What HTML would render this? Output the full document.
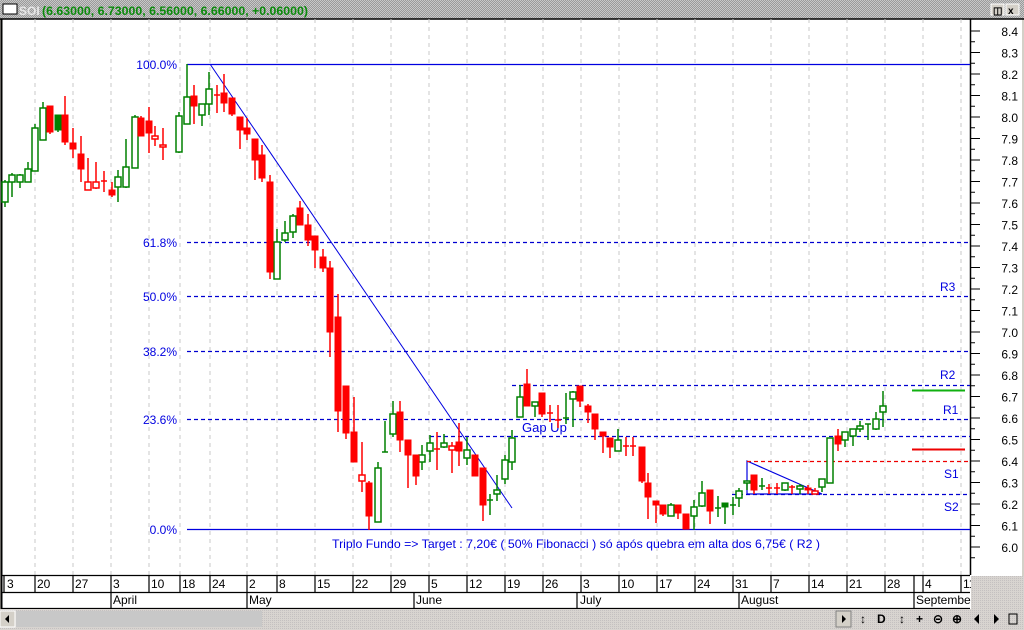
<!DOCTYPE html>
<html><head><meta charset="utf-8"><style>
html,body{margin:0;padding:0;width:1024px;height:630px;overflow:hidden;background:#d4d0c8;font-family:"Liberation Sans",sans-serif}
svg{position:absolute;left:0;top:0}
.G path,.GF path{stroke:#008000;stroke-width:1.5;fill:none}
.G rect{fill:#fff;stroke:#008000;stroke-width:1.5}
.GF rect{fill:#008000;stroke:#008000;stroke-width:1}
.R path,.RO path{stroke:#f00;stroke-width:1.5;fill:none}
.R rect{fill:#f00;stroke:#f00;stroke-width:1}
.RO rect{fill:#fff;stroke:#f00;stroke-width:1.5}
text{font-family:"Liberation Sans",sans-serif}
</style></head><body>
<svg width="1024" height="630" viewBox="0 0 1024 630">
<defs>
<pattern id="dith" width="2" height="2" patternUnits="userSpaceOnUse"><rect width="2" height="2" fill="#9a9a9a"/><rect width="1" height="1" fill="#c8c8c8"/><rect x="1" y="1" width="1" height="1" fill="#c8c8c8"/></pattern>
<pattern id="dith2" width="2" height="2" patternUnits="userSpaceOnUse"><rect width="2" height="2" fill="#d8d4d0"/><rect width="1" height="1" fill="#c4c0c0"/></pattern>
</defs>
<rect x="0" y="0" width="1024" height="19" fill="url(#dith)"/>
<rect x="3" y="4" width="14" height="10" fill="#fff" stroke="#000"/>
<text x="19" y="15" font-size="12" font-weight="bold" fill="#e8e8e8">SOI</text>
<text x="42" y="15" font-size="12" font-weight="bold" fill="#0a8a0a" textLength="266" lengthAdjust="spacingAndGlyphs">(6.63000, 6.73000, 6.56000, 6.66000, +0.06000)</text>
<rect x="991" y="4" width="13" height="11" fill="#d4d0c8" stroke="#fff"/><text x="993" y="14" font-size="10" font-weight="bold">&#9707;</text>
<rect x="1006" y="4" width="13" height="11" fill="#d4d0c8" stroke="#fff"/><text x="1008" y="14" font-size="10" font-weight="bold">x</text>
<rect x="2" y="19" width="1020" height="590" fill="#fff"/>
<line x1="0" y1="19" x2="1024" y2="19" stroke="#000" stroke-width="1.5"/>
<line x1="1.5" y1="19" x2="1.5" y2="609" stroke="#000" stroke-width="2"/>
<g stroke="#c8c8c8" stroke-width="1" stroke-dasharray="4,4">
<path d="M35 19V575M73 19V575M111 19V575M149 19V575M180 19V575M210 19V575M247 19V575M277 19V575M315 19V575M353 19V575M391 19V575M429 19V575M467 19V575M505 19V575M543 19V575M581 19V575M619 19V575M657 19V575M695 19V575M733 19V575M771 19V575M809 19V575M847 19V575M885 19V575M923 19V575M961 19V575"/>
</g>
<line x1="970.5" y1="19" x2="970.5" y2="575" stroke="#000" stroke-width="1.5"/>
<g stroke="#000" stroke-width="1">
<path d="M970 31h10M970 52.5h10M970 74h10M970 95.5h10M970 117h10M970 138.5h10M970 160h10M970 181.5h10M970 203h10M970 224.5h10M970 246h10M970 267.5h10M970 289h10M970 310.5h10M970 332h10M970 353.5h10M970 375h10M970 396.5h10M970 418h10M970 439.5h10M970 461h10M970 482.5h10M970 504h10M970 525.5h10M970 547h10"/>
<path d="M970 41.75h5M970 63.25h5M970 84.75h5M970 106.25h5M970 127.75h5M970 149.25h5M970 170.75h5M970 192.25h5M970 213.75h5M970 235.25h5M970 256.75h5M970 278.25h5M970 299.75h5M970 321.25h5M970 342.75h5M970 364.25h5M970 385.75h5M970 407.25h5M970 428.75h5M970 450.25h5M970 471.75h5M970 493.25h5M970 514.75h5M970 536.25h5M970 557.75h5"/>
</g>
<g font-size="12" fill="#000" text-anchor="end">
<text x="1018" y="36">8.4</text><text x="1018" y="57.5">8.3</text><text x="1018" y="79">8.2</text><text x="1018" y="100.5">8.1</text><text x="1018" y="122">8.0</text><text x="1018" y="143.5">7.9</text><text x="1018" y="165">7.8</text><text x="1018" y="186.5">7.7</text><text x="1018" y="208">7.6</text><text x="1018" y="229.5">7.5</text><text x="1018" y="251">7.4</text><text x="1018" y="272.5">7.3</text><text x="1018" y="294">7.2</text><text x="1018" y="315.5">7.1</text><text x="1018" y="337">7.0</text><text x="1018" y="358.5">6.9</text><text x="1018" y="380">6.8</text><text x="1018" y="401.5">6.7</text><text x="1018" y="423">6.6</text><text x="1018" y="444.5">6.5</text><text x="1018" y="466">6.4</text><text x="1018" y="487.5">6.3</text><text x="1018" y="509">6.2</text><text x="1018" y="530.5">6.1</text><text x="1018" y="552">6.0</text>
</g>
<g stroke="#0000e0" stroke-width="1.2">
<path d="M187 64.5H970M187 529.5H970"/>
<path d="M210 64L512 508" stroke-width="1"/>
<path d="M747 461V494H822ZM747 461L822 494" fill="none"/>
</g>
<g stroke="#0000d0" stroke-width="1.2" stroke-dasharray="4,3" fill="none">
<path d="M187 242.5H970M187 296.5H970M187 351.5H970M187 419.5H970M512 385.5H970M430 436.5H970M732 494.5H970"/>
</g>
<path d="M747 461.5H970" stroke="#e00" stroke-width="1.2" stroke-dasharray="4,3"/>
<path d="M912 390.5H965" stroke="#10b010" stroke-width="2"/>
<path d="M912 449.5H965" stroke="#e00" stroke-width="2"/>
<g font-size="12" fill="#0000e0">
<g text-anchor="end"><text x="177" y="69">100.0%</text><text x="177" y="247">61.8%</text><text x="177" y="301">50.0%</text><text x="177" y="356">38.2%</text><text x="177" y="424">23.6%</text><text x="177" y="534">0.0%</text></g>
<text x="940" y="291">R3</text><text x="940" y="379">R2</text><text x="943" y="414">R1</text><text x="944" y="478">S1</text><text x="944" y="511">S2</text>
<text x="522" y="432" font-size="13">Gap Up</text>
<text x="332" y="548" textLength="488" lengthAdjust="spacingAndGlyphs">Triplo Fundo =&gt; Target : 7,20€ ( 50% Fibonacci ) só após quebra em alta dos 6,75€ ( R2 )</text>
</g>
<g class="G">
<path d="M5 180V207"/><rect x="2" y="182" width="6" height="20"/>
<path d="M12 173V197"/><rect x="9" y="175" width="6" height="7"/>
<path d="M20 174V188"/><rect x="17" y="175" width="6" height="7"/>
<path d="M28 162V182"/><rect x="25" y="169" width="6" height="13"/>
<path d="M35 124V171"/><rect x="32" y="128" width="6" height="43"/>
<path d="M43 102V140"/><rect x="40" y="108" width="6" height="32"/>
<path d="M118 170V202"/><rect x="115" y="177" width="6" height="10"/>
<path d="M126 139V188"/><rect x="123" y="167" width="6" height="20"/>
<path d="M135 115V168"/><rect x="132" y="117" width="6" height="51"/>
<path d="M179 112V153"/><rect x="176" y="116" width="6" height="36"/>
<path d="M187 64V124"/><rect x="184" y="97" width="6" height="27"/>
<path d="M202 104V126"/><rect x="199" y="104" width="6" height="11"/>
<path d="M209 72V115"/><rect x="206" y="89" width="6" height="15"/>
<path d="M277 229V279"/><rect x="274" y="242" width="6" height="37"/>
<path d="M285 221V242"/><rect x="282" y="233" width="6" height="7"/>
<path d="M293 214V238"/><rect x="290" y="216" width="6" height="16"/>
<path d="M378 462V522"/><rect x="375" y="468" width="6" height="54"/>
<path d="M385 421V452M382 452h6"/>
<path d="M393 401V437"/><rect x="390" y="414" width="6" height="20"/>
<path d="M422 445V470"/><rect x="419" y="455" width="6" height="7"/>
<path d="M430 435V462"/><rect x="427" y="443" width="6" height="8"/>
<path d="M444 434V448"/><rect x="441" y="443" width="6" height="4"/>
<path d="M467 437V465"/><rect x="464" y="450" width="6" height="8"/>
<path d="M490 494V515M487 500h6"/>
<path d="M497 475V501"/><rect x="494" y="490" width="6" height="4"/>
<path d="M505 455V484"/><rect x="502" y="460" width="6" height="19"/>
<path d="M512 430V470"/><rect x="509" y="438" width="6" height="24"/>
<path d="M520 385V417"/><rect x="517" y="397" width="6" height="20"/>
<path d="M535 402V417"/><rect x="532" y="402" width="6" height="4"/>
<path d="M566 393V424M563 418h6"/>
<path d="M573 391V427"/><rect x="570" y="392" width="6" height="7"/>
<path d="M618 429V451"/><rect x="615" y="440" width="6" height="11"/>
<path d="M671 503V516"/><rect x="668" y="505" width="6" height="11"/>
<path d="M694 500V530"/><rect x="691" y="507" width="6" height="9"/>
<path d="M702 481V507"/><rect x="699" y="493" width="6" height="13"/>
<path d="M718 496V517M715 508h6"/>
<path d="M733 497V515M730 505h6"/>
<path d="M739 488V507"/><rect x="736" y="491" width="6" height="7"/>
<path d="M747 481V490"/><rect x="744" y="481" width="6" height="2"/>
<path d="M762 478V490M759 486h6"/>
<path d="M785 483V491"/><rect x="782" y="483" width="6" height="7"/>
<path d="M800 484V494"/><rect x="797" y="486" width="6" height="3"/>
<path d="M822 479V492"/><rect x="819" y="479" width="6" height="8"/>
<path d="M830 438V483"/><rect x="827" y="438" width="6" height="45"/>
<path d="M845 432V447"/><rect x="842" y="432" width="6" height="8"/>
<path d="M853 429V446"/><rect x="850" y="429" width="6" height="7"/>
<path d="M860 421V432"/><rect x="857" y="426" width="6" height="3"/>
<path d="M868 424V440M865 424h6"/>
<path d="M876 412V430"/><rect x="873" y="419" width="6" height="10"/>
<path d="M883 391V427"/><rect x="880" y="406" width="6" height="6"/>
</g>
<g class="GF">
<path d="M58 115V132"/><rect x="55" y="115" width="6" height="15"/>
<path d="M725 503V524"/><rect x="722" y="503" width="6" height="4"/>
</g>
<g class="R">
<path d="M50 106V134"/><rect x="47" y="106" width="6" height="26"/>
<path d="M65 96V145"/><rect x="62" y="115" width="6" height="27"/>
<path d="M73 128V158"/><rect x="70" y="143" width="6" height="6"/>
<path d="M81 136V182"/><rect x="78" y="154" width="6" height="15"/>
<path d="M104 171V192M101 181h6"/>
<path d="M112 182V197"/><rect x="109" y="190" width="6" height="5"/>
<path d="M141 116V136"/><rect x="138" y="118" width="6" height="18"/>
<path d="M149 107V153"/><rect x="146" y="121" width="6" height="12"/>
<path d="M194 85V124"/><rect x="191" y="96" width="6" height="10"/>
<path d="M217 85V113M214 95h6"/>
<path d="M224 74V112"/><rect x="221" y="93" width="6" height="10"/>
<path d="M232 98V116"/><rect x="229" y="98" width="6" height="16"/>
<path d="M240 117V149"/><rect x="237" y="117" width="6" height="13"/>
<path d="M247 118V140"/><rect x="244" y="128" width="6" height="6"/>
<path d="M255 139V180"/><rect x="252" y="139" width="6" height="21"/>
<path d="M262 145V182"/><rect x="259" y="155" width="6" height="23"/>
<path d="M270 175V279"/><rect x="267" y="182" width="6" height="90"/>
<path d="M300 201V225"/><rect x="297" y="208" width="6" height="17"/>
<path d="M308 214V246"/><rect x="305" y="225" width="6" height="15"/>
<path d="M315 236V268"/><rect x="312" y="236" width="6" height="14"/>
<path d="M323 249V272"/><rect x="320" y="257" width="6" height="11"/>
<path d="M330 261V357"/><rect x="327" y="268" width="6" height="64"/>
<path d="M338 294V432"/><rect x="335" y="317" width="6" height="94"/>
<path d="M346 386V439"/><rect x="343" y="386" width="6" height="47"/>
<path d="M354 397V462"/><rect x="351" y="432" width="6" height="30"/>
<path d="M369 481V530"/><rect x="366" y="483" width="6" height="33"/>
<path d="M400 401V452"/><rect x="397" y="412" width="6" height="28"/>
<path d="M408 440V488"/><rect x="405" y="440" width="6" height="15"/>
<path d="M416 455V485"/><rect x="413" y="455" width="6" height="21"/>
<path d="M437 432V470M434 449h6"/>
<path d="M459 423V466"/><rect x="456" y="442" width="6" height="9"/>
<path d="M475 455V476"/><rect x="472" y="455" width="6" height="21"/>
<path d="M483 468V521"/><rect x="480" y="468" width="6" height="37"/>
<path d="M527 369V406"/><rect x="524" y="384" width="6" height="22"/>
<path d="M542 393V417"/><rect x="539" y="393" width="6" height="21"/>
<path d="M550 405V422M547 413h6"/>
<path d="M558 405V428M555 420h6"/>
<path d="M580 386V407"/><rect x="577" y="386" width="6" height="15"/>
<path d="M588 404V423"/><rect x="585" y="406" width="6" height="6"/>
<path d="M595 414V440"/><rect x="592" y="414" width="6" height="15"/>
<path d="M603 432V453"/><rect x="600" y="432" width="6" height="4"/>
<path d="M610 438V458"/><rect x="607" y="438" width="6" height="9"/>
<path d="M626 437V456M623 446h6"/>
<path d="M633 437V456M630 446h6"/>
<path d="M642 447V483"/><rect x="639" y="447" width="6" height="34"/>
<path d="M648 473V519"/><rect x="645" y="483" width="6" height="14"/>
<path d="M656 501V523"/><rect x="653" y="501" width="6" height="4"/>
<path d="M663 505V516"/><rect x="660" y="505" width="6" height="9"/>
<path d="M678 505V519"/><rect x="675" y="505" width="6" height="8"/>
<path d="M686 514V529"/><rect x="683" y="514" width="6" height="15"/>
<path d="M710 490V524"/><rect x="707" y="490" width="6" height="21"/>
<path d="M754 475V494"/><rect x="751" y="475" width="6" height="15"/>
<path d="M769 484V494M766 488h6"/>
<path d="M777 483V494M774 488h6"/>
<path d="M792 485V494M789 487h6"/>
<path d="M808 485V494"/><rect x="805" y="488" width="6" height="2"/>
<path d="M838 429V451"/><rect x="835" y="436" width="6" height="8"/>
</g>
<g class="RO">
<path d="M88 158V190"/><rect x="85" y="182" width="6" height="8"/>
<path d="M96 162V189"/><rect x="93" y="182" width="6" height="6"/>
<path d="M155 126V146"/><rect x="152" y="136" width="6" height="3"/>
<path d="M163 128V160"/><rect x="160" y="145" width="6" height="2"/>
<path d="M362 442V492"/><rect x="359" y="475" width="6" height="6"/>
<path d="M452 442V473"/><rect x="449" y="446" width="6" height="4"/>
<path d="M815 488V494"/><rect x="812" y="491" width="6" height="3"/>
</g>
<g stroke="#000" stroke-width="1.2" fill="none">
<path d="M2 575.5H970M2 592.5H970M2 608.5H970"/>
<path d="M4 575V592M35 575V592M73 575V592M111 575V592M149 575V592M180 575V592M210 575V592M247 575V592M277 575V592M315 575V592M353 575V592M391 575V592M429 575V592M467 575V592M505 575V592M543 575V592M581 575V592M619 575V592M657 575V592M695 575V592M733 575V592M771 575V592M809 575V592M847 575V592M885 575V592M914 575V592M923 575V592M961 575V592"/>
<path d="M111 592V608M247 592V608M414 592V608M577 592V608M739 592V608M914 592V608"/>
</g>
<g font-size="12" fill="#000">
<text x="7" y="588">3</text><text x="37" y="588">20</text><text x="75" y="588">27</text><text x="113" y="588">3</text><text x="151" y="588">10</text><text x="182" y="588">18</text><text x="212" y="588">24</text><text x="249" y="588">2</text><text x="279" y="588">8</text><text x="317" y="588">15</text><text x="355" y="588">22</text><text x="393" y="588">29</text><text x="431" y="588">5</text><text x="469" y="588">12</text><text x="507" y="588">19</text><text x="545" y="588">26</text><text x="583" y="588">3</text><text x="621" y="588">10</text><text x="659" y="588">17</text><text x="697" y="588">24</text><text x="735" y="588">31</text><text x="773" y="588">7</text><text x="811" y="588">14</text><text x="849" y="588">21</text><text x="887" y="588">28</text><text x="925" y="588">4</text><text x="963" y="588">11</text>
<text x="113" y="604">April</text><text x="249" y="604">May</text><text x="416" y="604">June</text><text x="580" y="604">July</text><text x="741" y="604">August</text><text x="916" y="604">September</text>
</g>
<rect x="971" y="576" width="53" height="33" fill="url(#dith2)"/>
<rect x="0" y="609" width="1024" height="21" fill="url(#dith2)"/>
<rect x="0" y="611" width="15" height="16" fill="#d4d0c8" stroke="#fff"/>
<path d="M9 615L5 619L9 623Z" fill="#000"/>
<rect x="16" y="611" width="246" height="16" fill="#c8c8c8"/>
<rect x="836" y="611" width="15" height="16" fill="#d4d0c8" stroke="#808080"/>
<path d="M842 615L846 619L842 623Z" fill="#000"/>
<g font-size="12" font-weight="bold" fill="#000">
<text x="860" y="623">&#8597;</text><text x="877" y="623" font-family="Liberation Serif">D</text>
<text x="899" y="623">&#8597;</text><text x="916" y="623">+</text><text x="933" y="623">&#8861;</text><text x="952" y="623">&#8853;</text>
</g>
<path d="M979 614L974 619L979 624ZM994 614L999 619L994 624Z" fill="#000"/>
<rect x="1009" y="614" width="8" height="10" fill="none" stroke="#000"/>
</svg>
</body></html>
